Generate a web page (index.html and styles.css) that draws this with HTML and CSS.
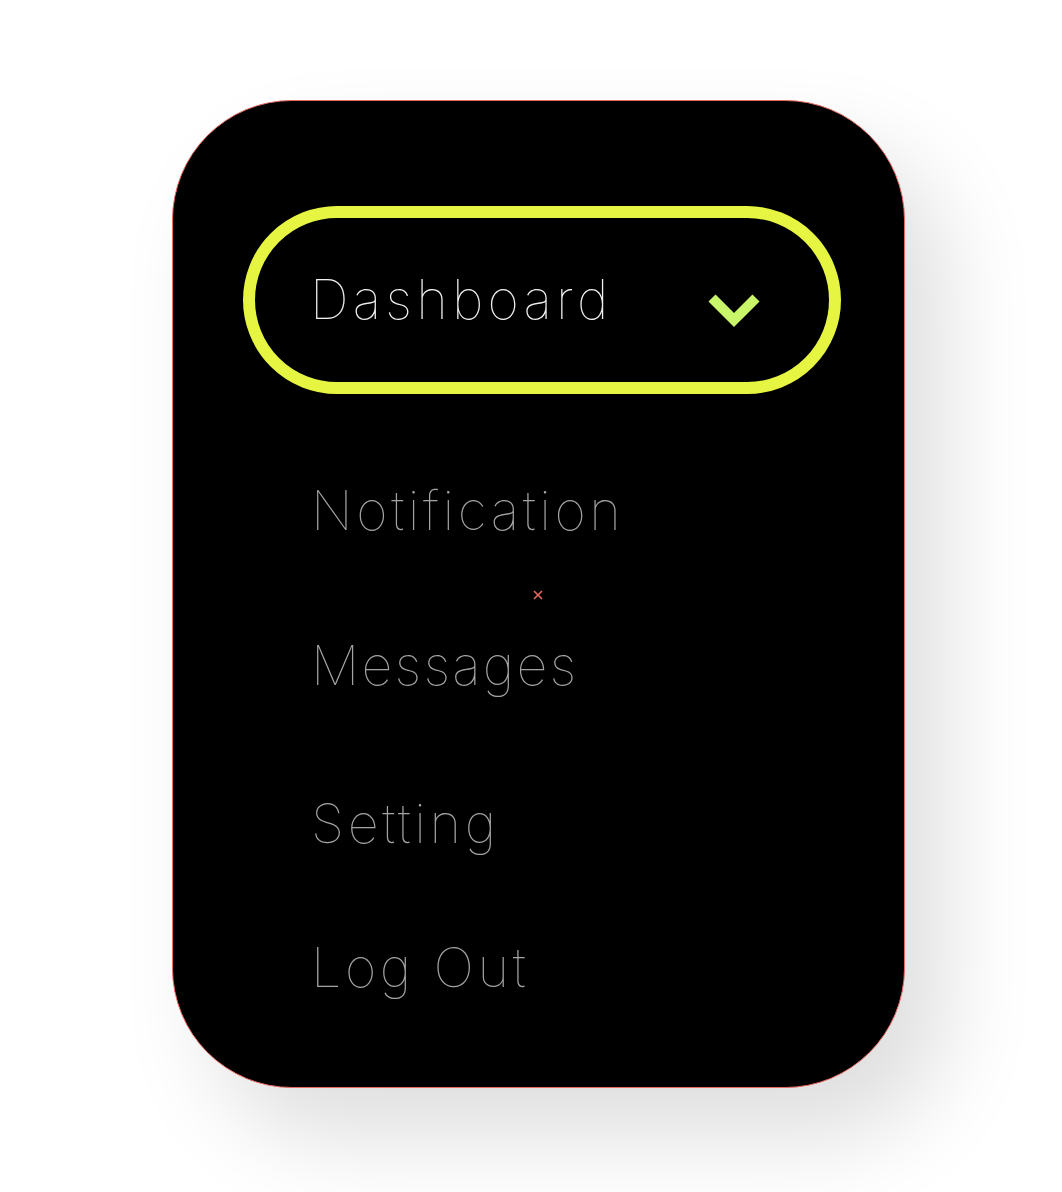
FILE: index.html
```html
<!DOCTYPE html>
<html lang="en">
<head>
<meta charset="utf-8">
<title>Menu</title>
<link rel="stylesheet" href="styles.css">
</head>
<body>
<main class="stage">
  <nav class="card">
    <div class="pill">
      <span class="pill-label">Dashboard</span>
      <svg class="chevron" width="54" height="36" viewBox="0 0 54 36">
        <path d="M5 6 L27 28 L49 6" fill="none" stroke="#c9f56b" stroke-width="10" stroke-linecap="butt" stroke-linejoin="miter"/>
      </svg>
    </div>
    <ul class="items">
      <li class="item item-notification">Notification</li>
      <li class="item item-messages">Messages</li>
      <li class="item item-setting">Setting</li>
      <li class="item item-logout">Log Out</li>
    </ul>
    <svg class="marker" width="10" height="10" viewBox="0 0 10 10">
      <path d="M1 1 L9 9 M9 1 L1 9" stroke="#e8695f" stroke-width="1.6"/>
    </svg>
  </nav>
</main>
</body>
</html>
```
FILE: styles.css
```css
html, body {
  margin: 0;
  padding: 0;
  background: #ffffff;
}
.stage {
  width: 1062px;
  height: 1192px;
  padding: 100px 0 0 172px;
  box-sizing: border-box;
  font-family: "Inter", "Lato", sans-serif;
}
.card {
  position: relative;
  width: 733px;
  height: 988px;
  box-sizing: border-box;
  background: #000;
  border: 1px solid #e8695f;
  border-radius: 120px;
  box-shadow: 40px 50px 90px rgba(0, 0, 0, 0.13);
  padding: 105px 0 0 70px;
}
.pill {
  width: 598px;
  height: 188px;
  box-sizing: border-box;
  border: 12px solid #e6f542;
  border-radius: 94px;
  display: flex;
  align-items: center;
  padding: 0 68px 0 55px;
  justify-content: space-between;
}
.pill-label {
  color: #f0f0f0;
  font-size: 54px;
  font-weight: 120;
  letter-spacing: 4.2px;
  line-height: 1;
}
.chevron {
  display: block;
  margin-top: 20px;
}
.item {
  color: #a3a3a3;
  font-size: 54px;
  font-weight: 120;
  letter-spacing: 3.6px;
  line-height: 1;
}
.items {
  list-style: none;
  margin: 0;
  padding: 0 0 0 68px;
}
.item-notification { margin-top: 90px; }
.item-messages { margin-top: 101px; letter-spacing: 2.2px; }
.item-setting { margin-top: 104px; }
.item-logout { margin-top: 90px; }
.marker {
  position: absolute;
  left: 360px;
  top: 489px;
}
```
